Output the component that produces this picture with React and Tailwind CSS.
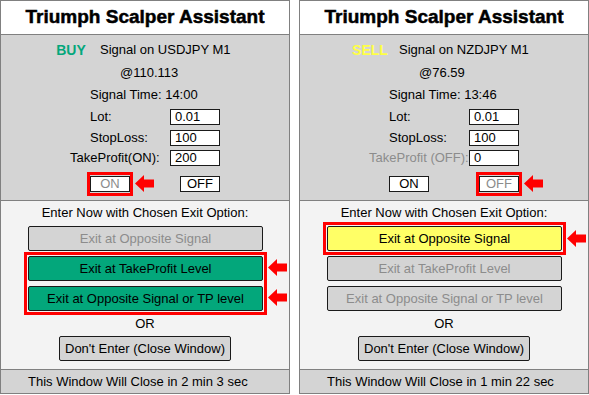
import React from "react";

const Arrow = () => (
  <svg width="19" height="17" viewBox="0 0 19 17" className="block">
    <path d="M0 8.5 L9 0 V4.5 H19 V12.5 H9 V17 Z" fill="#ff0000" />
  </svg>
);

const Input = ({ value }) => (
  <div className="w-[50px] h-[16px] shrink-0 bg-white border border-[#1a1a1a] pl-[4px] flex items-center leading-none">
    {value}
  </div>
);

const SmallBtn = ({ label, disabled }) => (
  <div
    className={
      "w-[40px] h-[16px] bg-white border border-[#1a1a1a] flex items-center justify-center leading-none " +
      (disabled ? "text-[#8c8c8c]" : "text-black")
    }
  >
    {label}
  </div>
);

const ExitBtn = ({ label, kind }) => {
  const cls =
    kind === "green"
      ? "bg-[#03a77b] text-black"
      : kind === "yellow"
      ? "bg-[#ffff66] text-black"
      : "bg-[#d4d4d4] text-[#8c8c8c]";
  return (
    <div
      className={
        "w-[235px] h-[25px] border border-[#1a1a1a] rounded-[2px] flex items-center justify-center " +
        cls
      }
    >
      {label}
    </div>
  );
};

const Frame = () => (
  <div className="absolute -inset-[4px] border-[3px] border-[#ff0000] pointer-events-none" />
);

function Panel({ d }) {
  return (
    <div className="w-[290px] h-[394px] border border-[#808080] flex flex-col shrink-0 text-[13px] text-black">
      <div className="h-[33px] bg-white flex items-center justify-center border-b border-[#808080] box-content">
        <span className="text-[19px] font-bold [-webkit-text-stroke:0.5px_black]">
          Triumph Scalper Assistant
        </span>
      </div>
      <div className="h-[164px] bg-[#d4d4d4] border-b border-[#808080] box-content pt-[4px] flex flex-col">
        <div className="h-[23px] flex items-center shrink-0">
          <span
            className={
              "ml-[41px] w-[58px] text-center font-bold text-[14px] " + d.sigColor
            }
          >
            {d.sig}
          </span>
          <span>Signal on {d.pair} M1</span>
        </div>
        <div className="h-[22px] flex items-center pl-[119px] shrink-0">{d.price}</div>
        <div className="h-[22px] flex items-center pl-[89px] shrink-0">
          Signal Time: {d.time}
        </div>
        <div className="h-[16px] mt-[3px] flex items-center shrink-0">
          <span className="w-[169px] pl-[89px] shrink-0 whitespace-nowrap">Lot:</span>
          <Input value={d.lot} />
        </div>
        <div className="h-[16px] mt-[5px] flex items-center shrink-0">
          <span className="w-[169px] pl-[89px] shrink-0 whitespace-nowrap">StopLoss:</span>
          <Input value={d.sl} />
        </div>
        <div className="h-[16px] mt-[4px] flex items-center shrink-0">
          <span
            className={
              "w-[169px] pl-[69px] shrink-0 whitespace-nowrap " +
              (d.tpOff ? "text-[#8c8c8c]" : "")
            }
          >
            {d.tpLabel}
          </span>
          <Input value={d.tp} />
        </div>
        <div className="h-[16px] mt-[10px] flex items-center pl-[89px] shrink-0">
          <div className="relative">
            <SmallBtn label="ON" disabled={!d.tpOff} />
            {!d.tpOff && (
              <>
                <div className="absolute -inset-x-[3px] -inset-y-[4px] border-[3px] border-[#ff0000]" />
                <div className="absolute left-[calc(100%+5px)] top-[-1px]">
                  <Arrow />
                </div>
              </>
            )}
          </div>
          <div className="relative ml-[50px]">
            <SmallBtn label="OFF" disabled={d.tpOff} />
            {d.tpOff && (
              <>
                <div className="absolute -inset-x-[3px] -inset-y-[4px] border-[3px] border-[#ff0000]" />
                <div className="absolute left-[calc(100%+5px)] top-[-1px]">
                  <Arrow />
                </div>
              </>
            )}
          </div>
        </div>
      </div>
      <div className="h-[169px] bg-[#f3f3f3] border-b border-[#808080] box-content pt-[1px] flex flex-col">
        <div className="h-[20px] flex items-center justify-center shrink-0">
          Enter Now with Chosen Exit Option:
        </div>
        <div className="mt-[4px] ml-[27px] w-[235px] flex flex-col gap-[5px] shrink-0">
          <div className="relative w-[235px]">
            <ExitBtn label="Exit at Opposite Signal" kind={d.b1} />
            {d.b1 === "yellow" && (
              <>
                <Frame />
                <div className="absolute left-[calc(100%+5px)] top-[4px]">
                  <Arrow />
                </div>
              </>
            )}
          </div>
          <div className="relative w-[235px] flex flex-col gap-[5px]">
            <div className="relative">
              <ExitBtn label="Exit at TakeProfit Level" kind={d.b23} />
              {d.b23 === "green" && (
                <div className="absolute left-[calc(100%+5px)] top-[3px]">
                  <Arrow />
                </div>
              )}
            </div>
            <div className="relative">
              <ExitBtn label="Exit at Opposite Signal or TP level" kind={d.b23} />
              {d.b23 === "green" && (
                <div className="absolute left-[calc(100%+5px)] top-[3px]">
                  <Arrow />
                </div>
              )}
            </div>
            {d.b23 === "green" && <Frame />}
          </div>
        </div>
        <div className="h-[25px] flex items-center justify-center shrink-0">OR</div>
        <div className="ml-[58px] w-[172px] h-[25px] bg-[#d4d4d4] border border-[#1a1a1a] rounded-[2px] flex items-center justify-center shrink-0">
          Don't Enter (Close Window)
        </div>
      </div>
      <div className="h-[23px] bg-[#d4d4d4] flex items-center pl-[27px]">
        This Window Will Close in {d.left}
      </div>
    </div>
  );
}

const left = {
  sig: "BUY",
  sigColor: "text-[#03a77b]",
  pair: "USDJPY",
  price: "@110.113",
  time: "14:00",
  lot: "0.01",
  sl: "100",
  tp: "200",
  tpLabel: "TakeProfit(ON):",
  tpOff: false,
  b1: "gray",
  b23: "green",
  left: "2 min 3 sec",
};

const right = {
  sig: "SELL",
  sigColor: "text-[#ffff44]",
  pair: "NZDJPY",
  price: "@76.59",
  time: "13:46",
  lot: "0.01",
  sl: "100",
  tp: "0",
  tpLabel: "TakeProfit (OFF):",
  tpOff: true,
  b1: "yellow",
  b23: "gray",
  left: "1 min 22 sec",
};

export default function App() {
  return (
    <div className="w-[589px] h-[395px] bg-white flex gap-[9px] font-['Liberation_Sans',Arial,sans-serif]">
      <Panel d={left} />
      <Panel d={right} />
    </div>
  );
}
